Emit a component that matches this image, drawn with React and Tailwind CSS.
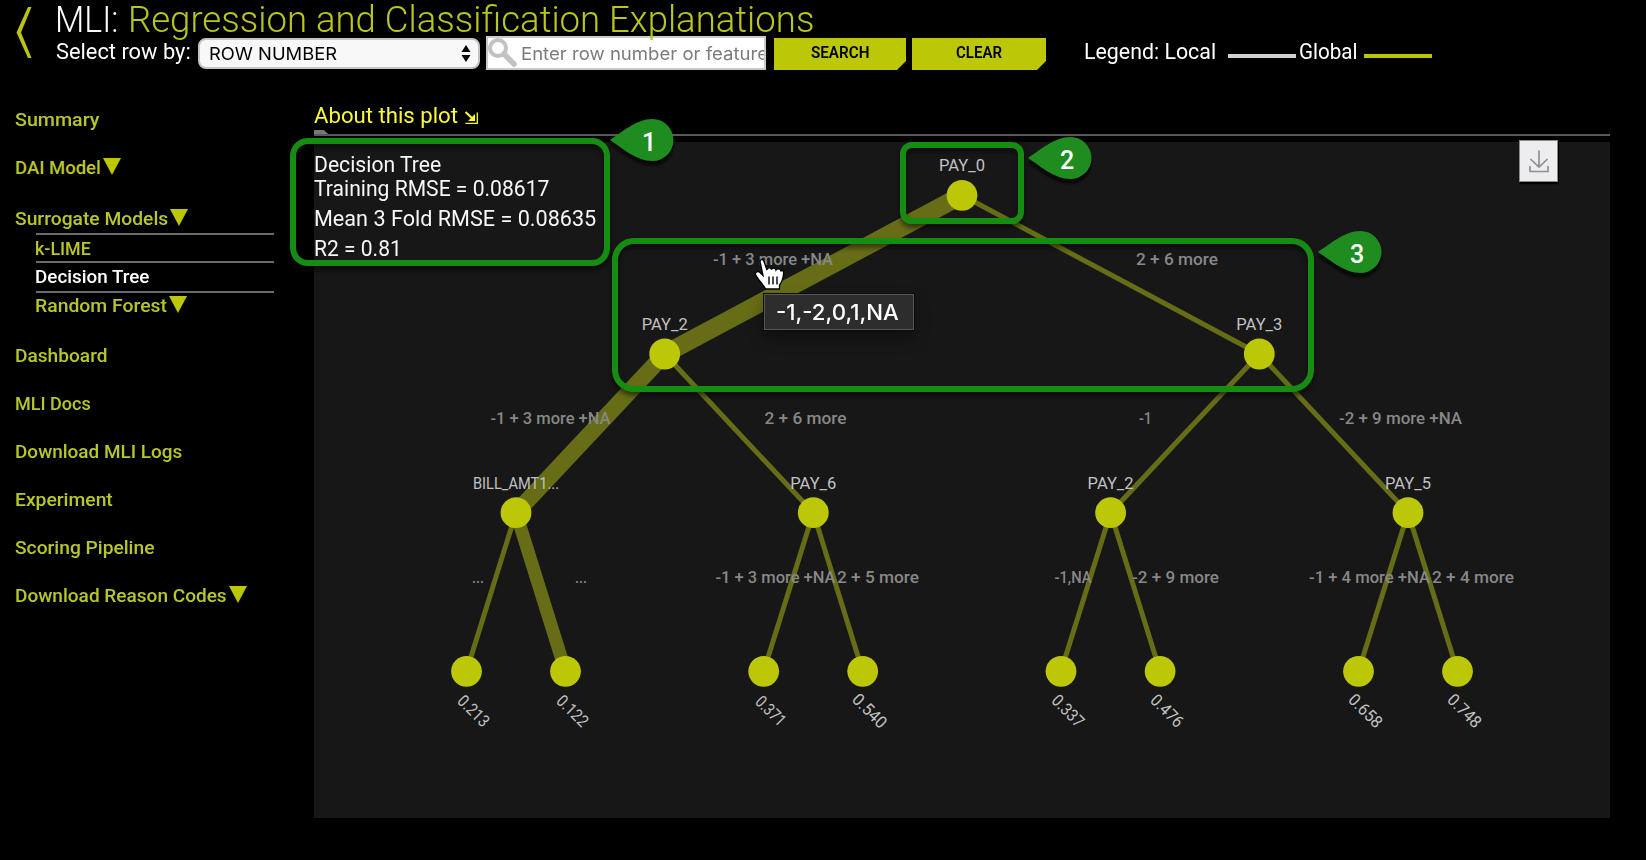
import { useLayoutEffect, useRef } from "react";

// Text squeezed or stretched horizontally to fill the width of its box.
function Fit({ className, children }) {
  const ref = useRef(null);
  useLayoutEffect(() => {
    const fit = () => {
      const el = ref.current;
      if (!el) return;
      el.style.transform = "none";
      el.style.transform = `scaleX(${el.parentElement.clientWidth / el.offsetWidth})`;
    };
    fit();
    document.fonts?.ready.then(fit);
  }, []);
  return (
    <span className={`block shrink-0 whitespace-nowrap ${className}`}>
      <span ref={ref} className="inline-block origin-left">{children}</span>
    </span>
  );
}

const Triangle = ({ className = "" }) => (
  <svg className={`h-[17px] w-[18px] shrink-0 fill-[#bbc707] ${className}`} viewBox="0 0 18 17">
    <path d="M0 0H18L9 17Z" />
  </svg>
);

function NavItem({ label, width, arrow, className = "h-12" }) {
  return (
    <a className={`flex items-center ${className}`}>
      <Fit className={width}>{label}</Fit>
      {arrow && <Triangle className="-mt-[3px] ml-[2px]" />}
    </a>
  );
}

function Sidebar() {
  return (
    <nav className="w-[314px] shrink-0 pl-[15px] pt-px text-[18.5px] font-medium leading-6 text-[#b9c62a]">
      <NavItem label="Summary" width="w-[84px]" />
      <NavItem label="DAI Model" width="w-[86px]" arrow />
      <NavItem label="Surrogate Models" width="w-[153px]" arrow className="h-[53px]" />
      <div className="-mt-[12px] ml-[21px] w-[238px]">
        <div className="border-t-2 border-[#6b6b6b]">
          <NavItem label="k-LIME" width="-ml-px w-[56px]" className="h-[26px] pt-0.5" />
        </div>
        <div className="border-t-2 border-[#6b6b6b] text-white">
          <NavItem label="Decision Tree" width="-ml-px w-[114px]" className="h-7 pb-px" />
        </div>
        <div className="border-t-2 border-[#6b6b6b]">
          <NavItem label="Random Forest" width="-ml-px w-[132px]" arrow className="h-[26px]" />
        </div>
      </div>
      <NavItem label="Dashboard" width="w-[93px]" className="mt-[13px] h-12" />
      <NavItem label="MLI Docs" width="w-[76px]" />
      <NavItem label="Download MLI Logs" width="w-[167px]" />
      <NavItem label="Experiment" width="w-[98px]" />
      <NavItem label="Scoring Pipeline" width="w-[139px]" />
      <NavItem label="Download Reason Codes" width="w-[212px]" arrow />
    </nav>
  );
}

function CutButton({ label, width, textWidth }) {
  return (
    <button
      className={`flex h-8 shrink-0 items-start justify-center bg-[#bbc707] pt-px pr-px text-base font-semibold leading-7 text-black [clip-path:polygon(0_0,100%_0,100%_calc(100%-9px),calc(100%-9px)_100%,0_100%)] ${width}`}
    >
      <Fit className={textWidth}>{label}</Fit>
    </button>
  );
}

function Header() {
  return (
    <header className="flex h-[95px] shrink-0">
      <svg className="ml-4 mt-[7px] h-[51px] w-4 shrink-0 fill-[#b9c514]" viewBox="0 0 16 51">
        <path d="M12 0H15.500L5 25.500L15.500 51H12L0.500 25.500Z" />
      </svg>
      <div className="ml-6">
        <h1 className="flex h-9 items-start text-[36px] font-light leading-[40px]">
          <Fit className="-ml-px w-[63px] text-white">MLI:</Fit>
          <Fit className="ml-[10px] w-[686px] text-[#b9c61e]">
            Regression and Classification Explanations
          </Fit>
        </h1>
        <div className="flex items-start">
          <Fit className="mt-0.5 w-[135px] text-[22px] leading-7 text-white">Select row by:</Fit>
          <div className="ml-[7px] mt-0.5 flex h-[31px] w-[282px] items-center justify-between rounded-[8px] border-2 border-[#c4c4c4] bg-[#f8f8f8] pl-[9px] pr-[7px] font-[Inter,sans-serif] text-[17.5px] text-black">
            <Fit className="mt-px w-[128px]">ROW NUMBER</Fit>
            <svg className="h-[17px] w-[10px]" viewBox="0 0 10 17">
              <path d="M0.500 7L5 0L9.500 7ZM0.500 10L5 17L9.500 10Z" />
            </svg>
          </div>
          <div className="ml-[6px] flex h-[34px] w-[280px] shrink-0 overflow-hidden border-2 border-[#cacaca] bg-white">
            <svg className="h-[29px] w-[29px] shrink-0 fill-none stroke-[#c2c2c2]" viewBox="0 0 29 29">
              <circle cx="10" cy="10" r="8" strokeWidth="4" />
              <path d="M16 16L26 26" strokeWidth="5.500" strokeLinecap="round" />
            </svg>
            <Fit className="ml-[4px] mt-0.5 w-[247px] font-[Inter,sans-serif] text-[17.5px] leading-7 text-[#7b7b7b]">
              Enter row number or feature
            </Fit>
          </div>
          <div className="ml-2 mt-0.5 flex gap-[6px]">
            <CutButton label="SEARCH" width="w-[132px]" textWidth="w-[58px]" />
            <CutButton label="CLEAR" width="w-[134px]" textWidth="w-[46px]" />
          </div>
          <div className="ml-[38px] mt-0.5 flex text-[22px] leading-7 text-white">
            <Fit className="w-[132px]">Legend: Local</Fit>
            <span className="ml-3 mt-4 h-1 w-[68px] bg-[#d2d2d2]" />
            <Fit className="ml-[3px] w-[59px]">Global</Fit>
            <span className="ml-[6px] mt-4 h-1 w-[68px] bg-[#bbc707]" />
          </div>
        </div>
      </div>
    </header>
  );
}

const nodes = [
  { x: 962, y: 195.3, label: "PAY_0", w: 46 },
  { x: 664.7, y: 354, label: "PAY_2", w: 46 },
  { x: 1259.3, y: 354, label: "PAY_3", w: 46 },
  { x: 516, y: 512.7, label: "BILL_AMT1...", w: 86 },
  { x: 813.3, y: 512.7, label: "PAY_6", w: 46 },
  { x: 1110.6, y: 512.7, label: "PAY_2", w: 46 },
  { x: 1408, y: 512.7, label: "PAY_5", w: 46 },
];

const leaves = [
  { x: 466.5, label: "0.213", w: 37 },
  { x: 565.5, label: "0.122", w: 37 },
  { x: 763.7, label: "0.371", w: 35 },
  { x: 862.7, label: "0.540", w: 41 },
  { x: 1061, label: "0.337", w: 38 },
  { x: 1160.1, label: "0.476", w: 39 },
  { x: 1358.5, label: "0.658", w: 40 },
  { x: 1457.5, label: "0.748", w: 40 },
];

const links = [
  [962, 195.3, 664.7, 354, 18],
  [962, 195.3, 1259.3, 354, 5],
  [664.7, 354, 516, 512.7, 16.5],
  [664.7, 354, 813.3, 512.7, 5],
  [1259.3, 354, 1110.6, 512.7, 5],
  [1259.3, 354, 1408, 512.7, 5],
  [516, 512.7, 466.5, 671.3, 5],
  [516, 512.7, 565.5, 671.3, 13],
  [813.3, 512.7, 763.7, 671.3, 5],
  [813.3, 512.7, 862.7, 671.3, 5],
  [1110.6, 512.7, 1061, 671.3, 5],
  [1110.6, 512.7, 1160.1, 671.3, 5],
  [1408, 512.7, 1358.5, 671.3, 5],
  [1408, 512.7, 1457.5, 671.3, 5],
];

const linkLabels = [
  [713, 265, 120, "-1 + 3 more +NA"],
  [1136, 265, 82, "2 + 6 more"],
  [490.500, 423.7, 120, "-1 + 3 more +NA"],
  [764.5, 423.7, 82, "2 + 6 more"],
  [1139, 423.7, 13, "-1"],
  [1339, 423.7, 123, "-2 + 9 more +NA"],
  [472, 582.7, 12, "..."],
  [575, 582.7, 12, "..."],
  [715.500, 582.7, 120, "-1 + 3 more +NA"],
  [837, 582.7, 82, "2 + 5 more"],
  [1054.500, 582.7, 37, "-1,NA"],
  [1132, 582.7, 87, "-2 + 9 more"],
  [1309, 582.7, 121, "-1 + 4 more +NA"],
  [1432, 582.7, 82, "2 + 4 more"],
];

function TreeChart() {
  return (
    <svg className="block h-full w-full" viewBox="314 142 1296 676">
      <g stroke="#676c16">
        {links.map(([x1, y1, x2, y2, w], i) => (
          <line key={i} x1={x1} y1={y1} x2={x2} y2={y2} strokeWidth={w} />
        ))}
      </g>
      <g fill="#bbc707">
        {nodes.map((n, i) => <circle key={i} cx={n.x} cy={n.y} r="15.4" />)}
        {leaves.map((n, i) => <circle key={i} cx={n.x} cy="671.3" r="15.4" />)}
      </g>
      <g fill="#888" fontSize="16.5" fontWeight="500">
        {linkLabels.map(([x, y, w, t], i) => (
          <text key={i} x={x} y={y} textLength={w} lengthAdjust="spacingAndGlyphs">{t}</text>
        ))}
      </g>
      <g fill="#c2c2c2" fontSize="17" fontWeight="400">
        {nodes.map((n, i) => (
          <text key={i} x={n.x - n.w / 2} y={n.y - 24} textLength={n.w} lengthAdjust="spacingAndGlyphs">
            {n.label}
          </text>
        ))}
        {leaves.map((n, i) => (
          <text
            key={i}
            x={-n.w / 2}
            textLength={n.w}
            lengthAdjust="spacingAndGlyphs"
            transform={`translate(${n.x + 2.9} 715) rotate(45)`}
          >
            {n.label}
          </text>
        ))}
      </g>
    </svg>
  );
}

function Plot() {
  return (
    <main className="w-[1296px] shrink-0">
      <div className="flex h-[35px] items-start pt-[7px] text-[22px] leading-7 text-[#f9f93a]">
        <Fit className="w-[144px]">About this plot</Fit>
        <svg className="ml-[7px] mt-[9px] h-[13px] w-[13px] fill-none stroke-[#f9f93a]" viewBox="0 0 13 13">
          <path d="M0.500 12.300H12.300V1.500" strokeWidth="1.300" />
          <path d="M0.500 1L8 8" strokeWidth="2.200" />
          <path d="M10 3V10H3Z" className="fill-[#f9f93a] stroke-none" />
        </svg>
      </div>
      <div className="h-3">
        <div className="h-1 w-[14px] bg-[#777] [clip-path:polygon(0_0,70%_0,100%_100%,0_100%)]" />
        <div className="h-0.5 bg-[#595959]" />
      </div>
      <section className="relative h-[676px] bg-[#171717]">
        <TreeChart />
        <div className="absolute left-0 top-[9px] text-[22px] leading-7 text-[#f7f7f7]">
          <Fit className="h-6 w-[127px]">Decision Tree</Fit>
          <Fit className="h-[30px] w-[235px]">Training RMSE = 0.08617</Fit>
          <Fit className="h-[30px] w-[282px]">Mean 3 Fold RMSE = 0.08635</Fit>
          <Fit className="w-[88px]">R2 = 0.81</Fit>
        </div>
        <button className="absolute left-[1205px] top-[-2px] flex h-[42px] w-[39px] items-center justify-center border border-[#8a8a8a] bg-[#ededef] shadow-[1px_2px_1px_#000]">
          <svg className="h-[23px] w-[20px] fill-none stroke-[#909090]" viewBox="0 0 20 23" strokeWidth="1.700">
            <path d="M10 0.500V17M1.500 9L10 17L18.500 9M1 16V21.500H19V16" />
          </svg>
        </button>
      </section>
    </main>
  );
}

function Marker({ n, className }) {
  return (
    <div className={`absolute flex h-[42px] w-16 items-center pl-[31px] ${className}`}>
      <svg
        className="absolute inset-0 h-full w-full overflow-visible fill-[#1f8c1f] [filter:drop-shadow(0_5px_1px_rgba(0,0,0,.6))]"
        viewBox="0 0 64 42"
      >
        <path d="M0 21C11 14 26 0 42.500 0A21 21 0 0 1 42.500 42C26 42 11 28 0 21Z" />
      </svg>
      <span className="relative mt-[5px] w-4 text-center text-[25px] font-medium leading-7 text-white">{n}</span>
    </div>
  );
}

function Annotations() {
  return (
    <div className="pointer-events-none absolute inset-0">
      <div className="absolute left-[290px] top-[138px] h-32 w-80 rounded-[18px] border-6 border-[#178c12] shadow-[0_4px_5px_rgba(0,0,0,.5),inset_0_4px_5px_rgba(0,0,0,.45)]" />
      <div className="absolute left-[900px] top-[142px] h-[82px] w-[124px] rounded-[12px] border-6 border-[#178c12] shadow-[0_4px_5px_rgba(0,0,0,.5),inset_0_4px_5px_rgba(0,0,0,.45)]" />
      <div className="absolute left-[612px] top-[238px] h-[154px] w-[702px] rounded-[22px] border-6 border-[#178c12] shadow-[0_4px_5px_rgba(0,0,0,.5),inset_0_4px_5px_rgba(0,0,0,.45)]" />
      <Marker n="1" className="left-[610px] top-[119px]" />
      <Marker n="2" className="left-[1028px] top-[137px]" />
      <Marker n="3" className="left-[1318px] top-[231px]" />
      <div className="absolute left-[764px] top-[294px] flex h-9 w-[150px] items-center border border-[#565656] bg-[#2d2d2d] pl-[11px] shadow-[0_0_0_1px_#0c0c0c,0_8px_16px_rgba(0,0,0,.35)]">
        <Fit className="w-[123px] font-[Inter,sans-serif] text-[21.5px] font-medium leading-8 text-white">-1,-2,0,1,NA</Fit>
      </div>
      <svg className="absolute left-[754px] top-[258px] h-[33px] w-[31px] overflow-visible" viewBox="0 0 31 33">
        <path
          d="M6 3.500C6 1 9.300 1 10 3.500L13 12C13 9.500 17 9 17.500 11.500C18 9.500 21.500 9.500 22 12C23 10 26.500 10.500 27 13C29 12 30 13 29.500 16C29 22 28 24 25.500 27V31H11.500C10 27 4 22 1.500 16.500C1 14 4 12.500 6 14.500L9 17.500Z"
          fill="#fff"
          stroke="#000"
          strokeWidth="1.300"
        />
        <path d="M15 18.500V26.500M19 18.500V26.500M23 18.500V26.500" stroke="#000" strokeWidth="1.400" />
      </svg>
    </div>
  );
}

export default function App() {
  return (
    <div className="relative flex h-[860px] w-[1646px] flex-col overflow-hidden bg-black font-[Roboto,sans-serif]">
      <Header />
      <div className="flex">
        <Sidebar />
        <Plot />
      </div>
      <Annotations />
    </div>
  );
}
